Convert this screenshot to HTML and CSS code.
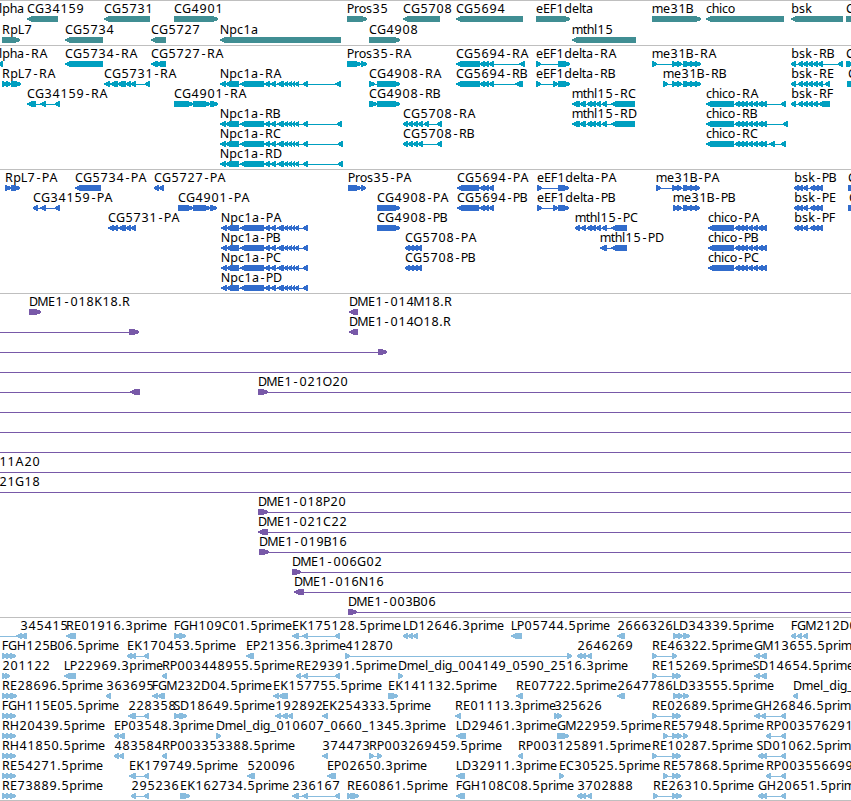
FILE: index.html
```html
<!DOCTYPE html>
<html lang="en">

<head>
  <meta charset="utf-8">
  <title>Genome Browser</title>
  <link rel="stylesheet" href="styles.css">
</head>

<body>
  <div id="browser">
    <div class="track genes" id="genes"></div>
    <div class="track transcripts" id="transcripts"></div>
    <div class="track proteins" id="proteins"></div>
    <div class="track clones" id="clones"></div>
    <div class="track ests" id="ests"></div>
  </div>
  <script src="script.js"></script>
</body>

</html>
```
FILE: styles.css
```css
* {
  box-sizing: border-box;
  margin: 0;
  padding: 0;
}

body {
  background: white;
  overflow: hidden;
}

#browser {
  width: 851px;
  height: 801px;
  overflow: hidden;
  border-bottom: 1px solid #bfbfbf;
}

.track {
  border-top: 1px solid #bfbfbf;
  padding: 2px 0 1px;
}

.genes,
.ests {
  padding-bottom: 0;
}

.row {
  display: block;
  width: 851px;
  height: 20px;
  overflow: visible;
}

.genes .row {
  height: 21px;
}

.label {
  font-family: "Noto Sans", sans-serif;
  font-size: 12.5px;
  fill: #000;
}

.shape {
  shape-rendering: crispEdges;
}

.genes .shape {
  fill: #408e93;
}

.transcripts .shape {
  fill: #009fc0;
}

.proteins .shape {
  fill: #316ccc;
}

.clones .shape {
  fill: #7859a8;
}

.ests .shape {
  fill: #88bcde;
}
```
FILE: script.js
```javascript
// feature: [label, direction, [exon start, exon end, ...], label x if not the start]
const npcTail = [240, 264, 264, 270, 270, 276, 277, 284, 284, 288, 288, 292, 292, 295, 295, 299, 303, 308];
const npcR = [220, 226, 225, 239].concat(npcTail);
const npcP = [221, 227, 226, 239].concat(npcTail);
const meTail = [677, 682, 683, 691, 690, 696];
const chicoTail = [735, 740, 739, 744, 743, 748, 748, 753, 753, 758, 758, 763, 762, 767];
const chicoR = [706, 734].concat(chicoTail);
const chicoP = [708, 734].concat(chicoTail);
const mthl = [587, 592, 591, 596, 596, 601, 602, 607];
const bskR = [791, 796, 798, 803, 803, 808, 808, 813, 813, 818];
const bskP = [794, 799, 798, 803, 803, 808, 810, 815, 814, 819, 818, 823];

const tracks = {
  genes: [
    [["lpha", "<", [], -1], ["CG34159", "<", [27, 58]], ["CG5731", "<", [104, 150]], ["CG4901", ">", [174, 218]],
     ["Pros35", ">", [347, 367]], ["CG5708", "<", [403, 440]], ["CG5694", "<", [456, 523]], ["eEF1delta", ">", [536, 570]],
     ["me31B", ">", [652, 701]], ["chico", "<", [706, 784]], ["bsk", "<", [791, 843]], ["C", ">", [846, 870]]],
    [["RpL7", ">", [2, 20]], ["CG5734", "<", [65, 103]], ["CG5727", "<", [151, 166]], ["Npc1a", "<", [220, 341]],
     ["CG4908", ">", [369, 400]], ["mthl15", "<", [572, 636]]]
  ],
  transcripts: [
    [["lpha-RA", "<", [-2, 3], -1], ["CG5734-RA", "<", [65, 103]], ["CG5727-RA", "<", [151, 158, 156, 166]],
     ["Pros35-RA", ">", [347, 361, 361, 367]], ["CG5694-RA", "<", [456, 480, 480, 485, 484, 489, 488, 494, 519, 525]],
     ["eEF1delta-RA", ">", [536, 541, 558, 570]], ["me31B-RA", ">", [652, 657, 672, 678].concat(meTail, [695, 701])],
     ["bsk-RB", "<", bskR.concat([818, 823, 838, 843])], ["C", ">", [846, 850, 848, 853]]],
    [["RpL7-RA", ">", [2, 7, 6, 11, 11, 21]], ["CG5731-RA", "<", [104, 110, 110, 118, 117, 126, 126, 131, 130, 136, 145, 150]],
     ["Npc1a-RA", "<", npcR.concat([335, 341])], ["CG4908-RA", ">", [369, 375, 377, 400]],
     ["CG5694-RB", "<", [456, 480, 480, 485, 484, 489, 488, 494, 515, 523]], ["eEF1delta-RB", ">", [536, 541, 553, 558, 558, 570]],
     ["me31B-RB", ">", [663, 668, 672, 678].concat(meTail, [695, 701])], ["bsk-RE", "<", bskR.concat([818, 823, 825, 830])],
     ["C", ">", [847, 851, 849, 855], 848]],
    [["CG34159-RA", "<", [27, 36, 40, 46, 55, 60]], ["CG4901-RA", ">", [174, 193, 193, 210, 210, 218]],
     ["CG4908-RB", ">", [369, 377, 377, 400]], ["mthl15-RC", "<", [572, 580, 579, 586].concat(mthl, [611, 635])],
     ["chico-RA", "<", chicoR.concat([781, 786])], ["bsk-RF", "<", bskR.concat([818, 830])]],
    [["Npc1a-RB", "<", npcR.concat([337, 342])], ["CG5708-RA", "<", [403, 408, 408, 413, 413, 418, 418, 423, 424, 429, 437, 442]],
     ["mthl15-RD", "<", [572, 580, 579, 586].concat(mthl, [611, 635])], ["chico-RB", "<", chicoR.concat([783, 788])]],
    [["Npc1a-RC", "<", npcR.concat([338, 343])], ["CG5708-RB", "<", [403, 408, 408, 413, 413, 418, 418, 423, 437, 442]],
     ["chico-RC", "<", chicoR.concat([769, 775, 781, 786])]],
    [["Npc1a-RD", "<", npcR.concat([338, 343])]]
  ],
  proteins: [
    [["RpL7-PA", ">", [5, 11, 11, 20]], ["CG5734-PA", "<", [75, 101]], ["CG5727-PA", "<", [154, 159, 158, 164]],
     ["Pros35-PA", ">", [348, 361, 361, 366]], ["CG5694-PA", "<", [457, 479, 479, 485, 484, 489, 488, 494]],
     ["eEF1delta-PA", ">", [537, 542, 558, 569]], ["me31B-PA", ">", [656, 661, 672, 678].concat(meTail, [695, 700])],
     ["bsk-PB", "<", bskP], ["C", ">", [848, 860]]],
    [["CG34159-PA", "<", [33, 38, 40, 46, 55, 60]], ["CG4901-PA", ">", [178, 193, 193, 210, 210, 217]],
     ["CG4908-PA", ">", [377, 400]], ["CG5694-PB", "<", [457, 479, 479, 485, 484, 489, 488, 494]],
     ["eEF1delta-PB", ">", [537, 542, 553, 558, 558, 569]], ["me31B-PB", ">", [673, 678].concat(meTail, [695, 700])],
     ["bsk-PE", "<", bskP], ["C", ">", [848, 860], 849]],
    [["CG5731-PA", "<", [108, 114, 113, 118, 118, 126, 126, 131, 131, 136]], ["Npc1a-PA", "<", npcP], ["CG4908-PB", ">", [377, 400]],
     ["mthl15-PC", "<", [575, 580, 580, 586].concat(mthl, [611, 627])], ["chico-PA", "<", chicoP], ["bsk-PF", "<", bskP]],
    [["Npc1a-PB", "<", npcP], ["CG5708-PA", "<", [405, 410, 409, 414, 413, 418, 417, 422]],
     ["mthl15-PD", "<", [600, 607, 611, 627]], ["chico-PB", "<", chicoP]],
    [["Npc1a-PC", "<", npcP], ["CG5708-PB", "<", [405, 410, 409, 414, 413, 418, 417, 422]], ["chico-PC", "<", chicoP]],
    [["Npc1a-PD", "<", npcP]]
  ],
  clones: [
    [["DME1-018K18.R", ">", [29, 41]], ["DME1-014M18.R", "<", [349, 358]]],
    [["", ">", [-20, -10, 129, 139]], ["DME1-014O18.R", "<", [349, 358]]],
    [["", ">", [-20, -10, 378, 387]]],
    [["", ">", [-20, -10, 860, 870]]],
    [["", "<", [-20, -10, 130, 140]], ["DME1-021O20", ">", [258, 268, 860, 870]]],
    [["", ">", [-20, -10, 860, 870]]],
    [["", ">", [-20, -10, 860, 870]]],
    [["", ">", [-20, -10, 860, 870]]],
    [["11A20", ">", [-20, -10, 860, 870], -1]],
    [["21G18", ">", [-20, -10, 860, 870], -1]],
    [["DME1-018P20", ">", [258, 268, 860, 870]]],
    [["DME1-021C22", "<", [258, 268, 860, 870]]],
    [["DME1-019B16", ">", [259, 269, 860, 870]]],
    [["DME1-006G02", ">", [292, 301, 860, 870]]],
    [["DME1-016N16", "<", [294, 304, 860, 870]]],
    [["DME1-003B06", ">", [348, 357, 860, 870]]]
  ],
  ests: [
    [["", "<", [-20, -10, 16, 22]], ["345415", "<", [20, 27]], ["RE01916.3prime", "<", [66, 76]], ["FGH109C01.5prime", ">", [174, 180, 179, 186]],
     ["EK175128.5prime", "<", [292, 299, 302, 308, 335, 340]], ["LD12646.3prime", "<", [403, 408, 408, 413, 413, 418]],
     ["LP05744.5prime", "<", [511, 522]], ["2666326", "<", [617, 625]], ["LD34339.5prime", ">", [673, 679, 678, 683, 683, 690]],
     ["FGM212D04.3prime", "<", [791, 796, 797, 802, 803, 808]]],
    [["FGH125B06.5prime", ">", [2, 7, 6, 11, 10, 16]], ["EK170453.5prime", "<", [127, 132, 131, 136, 144, 149]],
     ["EP21356.3prime", "<", [246, 254]], ["412870", ">", [345, 350, 567, 572]], ["2646269", "<", [577, 582, 581, 586, 586, 592]],
     ["RE46322.5prime", ">", [652, 657, 672, 677]], ["GM13655.5prime", "<", [754, 760, 760, 767]]],
    [["201122", ">", [2, 6, 5, 10]], ["LP22969.3prime", "<", [64, 76]], ["RP003448955.5prime", "<", [162, 167]],
     ["RE29391.5prime", "<", [296, 301, 302, 308, 335, 340]], ["Dmel_dig_004149_0590_2516.3prime", ">", [398, 403]],
     ["RE15269.5prime", ">", [652, 657, 672, 677, 676, 681]], ["SD14654.5prime", "<", [754, 760, 760, 767], 753]],
    [["RE28696.5prime", ">", [2, 7, 6, 11, 10, 17]], ["363695", "<", [106, 111]], ["FGM232D04.5prime", "<", [152, 158, 157, 165]],
     ["EK157755.5prime", "<", [273, 279, 278, 288]], ["EK141132.5prime", ">", [388, 398]], ["RE07722.5prime", "<", [516, 523]],
     ["2647786", "<", [617, 625]], ["LD33555.5prime", ">", [673, 679, 678, 683, 683, 689]], ["Dmel_dig_", "<", [793, 798]]],
    [["FGH115E05.5prime", ">", [2, 7, 6, 11, 10, 16]], ["228358", "<", [128, 136, 144, 149]], ["SD18649.5prime", ">", [174, 180, 179, 187]],
     ["192892", "<", [275, 281, 281, 288, 287, 293]], ["EK254333.5prime", "<", [322, 328]], ["RE01113.3prime", "<", [455, 461]],
     ["325626", ">", [554, 558, 557, 562]], ["RE02689.5prime", ">", [652, 657, 672, 677, 676, 681]],
     ["GH26846.5prime", "<", [754, 760, 760, 766, 781, 786]]],
    [["RH20439.5prime", ">", [2, 7, 6, 11, 10, 16]], ["EP03548.3prime", "<", [114, 119, 118, 125]],
     ["Dmel_dig_010607_0660_1345.3prime", ">", [216, 221]], ["LD29461.3prime", "<", [456, 466]], ["GM22959.5prime", ">", [557, 569]],
     ["RE57948.5prime", ">", [663, 668, 672, 678, 677, 682, 683, 688]], ["RP003576291.5prime", "<", [766, 771, 781, 786]]],
    [["RH41850.5prime", ">", [2, 7, 6, 11, 10, 16]], ["483584", "<", [114, 119, 118, 124]], ["RP003353388.5prime", "<", [162, 167]],
     ["374473", "<", [322, 328]], ["RP003269459.5prime", ">", [369, 374, 377, 382]], ["RP003125891.5prime", "<", [518, 523]],
     ["RE10287.5prime", ">", [652, 657, 672, 677, 676, 681]], ["SD01062.5prime", "<", [758, 763, 761, 767, 781, 786], 757]],
    [["RE54271.5prime", ">", [2, 7, 6, 11, 10, 16]], ["EK179749.5prime", "<", [129, 136, 144, 149]], ["520096", "<", [247, 255]],
     ["EP02650.3prime", "<", [327, 336]], ["LD32911.3prime", "<", [456, 465]], ["EC30525.5prime", ">", [559, 564]],
     ["RE57868.5prime", ">", [663, 668, 672, 677, 676, 681]], ["RP003556699.5prime", "<", [766, 771, 781, 786]]],
    [["RE73889.5prime", ">", [2, 7, 6, 11, 10, 16]], ["295236", "<", [131, 136, 144, 149]], ["EK162734.5prime", ">", [180, 190]],
     ["236167", "<", [292, 299, 302, 308, 335, 340]], ["RE60861.5prime", ">", [347, 352, 350, 359]], ["FGH108C08.5prime", "<", [456, 465]],
     ["3702888", "<", [577, 582, 581, 586, 586, 592]], ["RE26310.5prime", ">", [653, 658, 672, 677, 676, 682]],
     ["GH20651.5prime", "<", [758, 763, 761, 767, 781, 786]]]
  ]
};

const svgNS = "http://www.w3.org/2000/svg";
const glyphTop = 13;

// cell width of each character, digits and the rest are 8
const cells = {
  A: 9, B: 7, D: 9, E: 7, F: 6, G: 9, H: 9, L: 6, M: 10, N: 9, O: 9, P: 7, S: 6,
  a: 7, c: 6, e: 7, g: 7, h: 7, i: 3, k: 7, l: 3, m: 11, o: 7, r: 5, s: 6, t: 4,
  "-": 7, ".": 4, "_": 6
};
const measure = document.createElement("canvas").getContext("2d");
measure.font = '12.5px "Noto Sans"';

function add(parent, name, attrs) {
  const el = document.createElementNS(svgNS, name);
  for (const key in attrs) el.setAttribute(key, attrs[key]);
  parent.appendChild(el);
  return el;
}

// every character is centred in its own cell
function drawLabel(row, text, x) {
  const xs = [];
  for (const ch of text) {
    const cell = cells[ch] || 8;
    xs.push((x + (cell - measure.measureText(ch).width) / 2).toFixed(2));
    x += cell;
  }
  add(row, "text", { class: "label", x: xs.join(" "), y: 10 }).textContent = text;
}

function drawExon(row, dir, a, b) {
  const head = Math.min(6, b - a);
  const sign = dir === "<" ? 1 : -1;
  const tip = dir === "<" ? a : b;
  const back = dir === "<" ? b : a;
  const neck = tip + sign * (head - 1);
  const mid = tip + sign * head / 2;
  const y = glyphTop;
  add(row, "polygon", {
    class: "shape",
    points: `${back},${y} ${neck},${y} ${mid},${y + 1} ${tip},${y + 2} ${tip},${y + 4} ${mid},${y + 5} ${neck},${y + 6} ${back},${y + 6}`
  });
}

for (const id in tracks) {
  const track = document.getElementById(id);
  tracks[id].forEach(features => {
    const row = add(track, "svg", { class: "row" });
    features.forEach(([label, dir, exons, labelX]) => {
      if (exons.length > 2) {
        const start = exons[0];
        add(row, "rect", { class: "shape", x: start, y: glyphTop + 3, width: exons[exons.length - 1] - start, height: 1 });
      }
      for (let i = 0; i < exons.length; i += 2) drawExon(row, dir, exons[i], exons[i + 1]);
      if (label) drawLabel(row, label, labelX === undefined ? exons[0] : labelX);
    });
  });
}
```
